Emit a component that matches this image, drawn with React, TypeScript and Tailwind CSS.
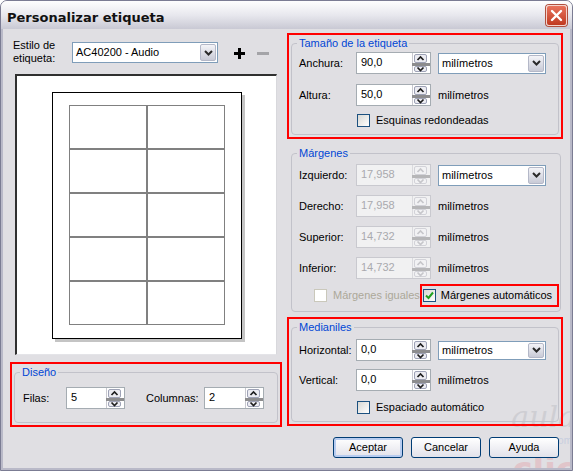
import clsx from "clsx";

function SpinArrows({ disabled }: { disabled?: boolean }) {
  const btn = disabled ? "#f2f2f4" : "#ececf2";
  const bd = disabled ? "#d2d2d8" : "#9ea2b6";
  const band = disabled ? "#b6b6b8" : "#8c8c8e";
  const arr = disabled ? "#c6c6ca" : "#1e1e1e";
  return (
    <svg width="18" height="20" viewBox="0 0 18 20" className="shrink-0">
      <line x1="0.5" y1="0" x2="0.5" y2="20" stroke={disabled ? "#dadade" : "#c8c8d0"} />
      <rect x="2.5" y="1.5" width="12" height="8" rx="1.5" fill={btn} stroke={bd} />
      <rect x="2.5" y="13.5" width="12" height="5" rx="1.5" fill={btn} stroke={bd} />
      <rect x="0" y="10" width="18" height="3" fill={band} />
      <path d="M5.5 7 L8.5 4 L11.5 7" fill="none" stroke={arr} strokeWidth="1.7" />
      <path d="M5.5 14.5 L8.5 17.5 L11.5 14.5" fill="none" stroke={arr} strokeWidth="1.7" />
    </svg>
  );
}

function Spin({ value, className, disabled }: { value: string; className: string; disabled?: boolean }) {
  return (
    <div
      className={clsx(
        "flex h-[22px] shrink-0 border",
        disabled ? "border-[#c9c9cf] bg-[#f1f1f2] text-[#a9a9ae]" : "border-[#a5acb2] bg-white text-black",
        className
      )}
    >
      <span className="flex-1 pl-[4px] pt-[3px]">{value}</span>
      <SpinArrows disabled={disabled} />
    </div>
  );
}

function Select({ value, className }: { value: string; className: string }) {
  return (
    <div className={clsx("flex shrink-0 items-center border border-[#7f9db9] bg-white", className)}>
      <span className="flex-1 pl-[3px]">{value}</span>
      <span className="mr-[1px] flex h-[calc(100%-2px)] w-[16px] items-center justify-center rounded-[2px] border border-[#b4b8c8] bg-linear-to-b from-[#f4f4f8] to-[#c8cad6]">
        <svg width="9" height="6" viewBox="0 0 9 6">
          <path d="M1 1 L4.5 4.5 L8 1" fill="none" stroke="#2a2a2a" strokeWidth="2" />
        </svg>
      </span>
    </div>
  );
}

function Check({ checked, disabled }: { checked?: boolean; disabled?: boolean }) {
  return (
    <span
      className={clsx(
        "flex h-[13px] w-[13px] shrink-0 items-center justify-center border",
        disabled ? "border-[#cac8bb] bg-white" : "border-[#1c5180] bg-linear-to-br from-[#d8d8d4] to-white"
      )}
    >
      {checked && (
        <svg width="9" height="9" viewBox="0 0 9 9">
          <path d="M1 4.5 L3.5 7 L8 1.5" fill="none" stroke="#21a121" strokeWidth="2" />
        </svg>
      )}
    </span>
  );
}

function Group({ title, className, children }: { title: string; className: string; children: React.ReactNode }) {
  return (
    <fieldset className={clsx("rounded-[4px] border border-[#c2c2ca]", className)}>
      <legend className="ml-[5px] px-[2px] text-[#0046d5]">{title}</legend>
      {children}
    </fieldset>
  );
}

function Row({ label, children, className }: { label: string; children: React.ReactNode; className?: string }) {
  return (
    <div className={clsx("flex h-[22px] items-center pl-[7px]", className)}>
      <span className="w-[57px] shrink-0">{label}</span>
      {children}
    </div>
  );
}

function Button({ label, primary }: { label: string; primary?: boolean }) {
  return (
    <button
      className={clsx(
        "h-[21px] w-[70px] rounded-[3px] border border-[#003c74] bg-linear-to-b from-white to-[#e2e2ea] text-[11px] text-black",
        primary && "shadow-[inset_0_0_0_2px_#b7ccf0]"
      )}
    >
      {label}
    </button>
  );
}

const cells = Array.from({ length: 10 }, (_, i) => i);

export default function App() {
  return (
    <div className="relative flex h-[471px] w-[573px] flex-col overflow-hidden rounded-t-[7px] border border-[#7b7c93] bg-[#e0dfe3] font-['Liberation_Sans',Arial,sans-serif] text-[11px] leading-[13px] text-black">
      {/* watermark, drawn first so the dialog sits over it */}
      <div className="pointer-events-none absolute right-[-4px] top-[401px] flex flex-col items-end opacity-30">
        <span className="font-['DejaVu_Serif',serif] text-[30px] italic leading-[30px] text-[#a8a8b0]">aula</span>
        <span className="mr-[4px] mt-[4px] text-[10px] leading-[10px] text-[#8fa8d8]">com</span>
        <span className="mt-[8px] font-['DejaVu_Sans',sans-serif] text-[34px] font-bold leading-[30px] text-[#e48a94]">clic</span>
      </div>

      {/* title bar */}
      <div className="relative flex h-[28px] shrink-0 items-start justify-between bg-linear-to-b from-[#fefefe] via-[#e8e8ee] to-[#c9c9d4]">
        <span className="mt-[9px] pl-[6px] font-['DejaVu_Sans',sans-serif] text-[13px] font-bold leading-[16px] text-[#111]">
          Personalizar etiqueta
        </span>
        <span className="mr-[5px] mt-[4px] flex h-[21px] w-[21px] items-center justify-center rounded-[3px] border border-[#f4d4cc] bg-linear-to-b from-[#e8735c] to-[#c0391f] shadow-[0_0_0_1px_#b0503e]">
          <svg width="13" height="13" viewBox="0 0 13 13">
            <path d="M2 2 L11 11 M11 2 L2 11" stroke="white" strokeWidth="2.4" strokeLinecap="round" />
          </svg>
        </span>
      </div>

      {/* body */}
      <div className="relative flex flex-1 border-x-[2px] border-b-[2px] border-[#b9b9c8]">
        {/* left column */}
        <div className="ml-[7px] flex w-[272px] flex-col pt-[10px]">
          <div className="flex h-[26px] items-start">
            <span className="w-[62px] pl-[3px]">
              Estilo de
              <br />
              etiqueta:
            </span>
            <Select value="AC40200 - Audio" className="mt-[3px] h-[21px] w-[146px]" />
            <svg width="11" height="11" viewBox="0 0 11 11" className="ml-[16px] mt-[9px]">
              <path d="M0 5.5 H11 M5.5 0 V11" stroke="#000" strokeWidth="3" />
            </svg>
            <svg width="12" height="3" viewBox="0 0 12 3" className="ml-[12px] mt-[13px]">
              <rect width="12" height="3" fill="#a4a4a8" />
            </svg>
          </div>

          <div className="ml-[5px] mt-[9px] flex h-[281px] w-[262px] items-center justify-center border-b border-l-2 border-r border-t-2 border-b-[#e4e4e8] border-l-[#303030] border-r-[#d8d8dc] border-t-[#303030] bg-white">
            <div className="flex h-[247px] w-[190px] items-center justify-center border border-black bg-white shadow-[3px_3px_0_#c4c4c4]">
              <div className="grid grid-cols-[78px_78px]">
                {cells.map((c) => (
                  <div key={c} className="h-[44px] w-[78px] border border-[#808080]" />
                ))}
              </div>
            </div>
          </div>

          <div className="mt-[7px] h-[65px] w-[272px] border-2 border-[#ff0000] p-[2px]">
            <Group title="Diseño" className="h-full">
              <div className="mt-[8px] flex h-[22px] items-center pl-[8px]">
                <span className="w-[43px]">Filas:</span>
                <Spin value="5" className="w-[59px]" />
                <span className="ml-[21px] w-[58px]">Columnas:</span>
                <Spin value="2" className="w-[60px]" />
              </div>
            </Group>
          </div>
        </div>

        {/* right column */}
        <div className="ml-[5px] flex w-[276px] flex-col pt-[4px]">
          <div className="h-[106px] border-2 border-[#ff0000] p-[2px]">
            <Group title="Tamaño de la etiqueta" className="h-full">
              <Row label="Anchura:" className="mt-[2px]">
                <Spin value="90,0" className="w-[75px]" />
                <Select value="milímetros" className="ml-[7px] h-[21px] w-[108px]" />
              </Row>
              <Row label="Altura:" className="mt-[10px]">
                <Spin value="50,0" className="w-[75px]" />
                <span className="ml-[7px]">milímetros</span>
              </Row>
              <div className="mt-[8px] flex items-center pl-[65px]">
                <Check />
                <span className="ml-[6px]">Esquinas redondeadas</span>
              </div>
            </Group>
          </div>

          <Group title="Márgenes" className="ml-[4px] mt-[8px] h-[165px] w-[268px]">
            <Row label="Izquierdo:" className="mt-[4px]">
              <Spin value="17,958" className="w-[75px]" disabled />
              <Select value="milímetros" className="ml-[7px] h-[21px] w-[108px]" />
            </Row>
            <Row label="Derecho:" className="mt-[9px]">
              <Spin value="17,958" className="w-[75px]" disabled />
              <span className="ml-[7px]">milímetros</span>
            </Row>
            <Row label="Superior:" className="mt-[9px]">
              <Spin value="14,732" className="w-[75px]" disabled />
              <span className="ml-[7px]">milímetros</span>
            </Row>
            <Row label="Inferior:" className="mt-[9px]">
              <Spin value="14,732" className="w-[75px]" disabled />
              <span className="ml-[7px]">milímetros</span>
            </Row>
            <div className="mt-[5px] flex h-[23px] items-center pl-[22px]">
              <Check disabled />
              <span className="ml-[6px] whitespace-nowrap text-[#aca899]">Márgenes iguales</span>
              <div className="ml-auto mr-[1px] flex h-[23px] w-[139px] shrink-0 items-center border-2 border-[#ff0000] pl-[1px]">
                <Check checked />
                <span className="ml-[5px] whitespace-nowrap">Márgenes automáticos</span>
              </div>
            </div>
          </Group>

          <div className="mt-[5px] h-[109px] border-2 border-[#ff0000] p-[2px]">
            <Group title="Medianiles" className="h-full">
              <Row label="Horizontal:" className="mt-[5px]">
                <Spin value="0,0" className="w-[75px]" />
                <Select value="milímetros" className="ml-[7px] h-[19px] w-[108px]" />
              </Row>
              <Row label="Vertical:" className="mt-[8px]">
                <Spin value="0,0" className="w-[75px]" />
                <span className="ml-[7px]">milímetros</span>
              </Row>
              <div className="mt-[10px] flex items-center pl-[65px]">
                <Check />
                <span className="ml-[6px]">Espaciado automático</span>
              </div>
            </Group>
          </div>

          <div className="mt-[11px] flex justify-end gap-[8px] pr-[4px]">
            <Button label="Aceptar" primary />
            <Button label="Cancelar" />
            <Button label="Ayuda" />
          </div>
        </div>
      </div>
    </div>
  );
}
